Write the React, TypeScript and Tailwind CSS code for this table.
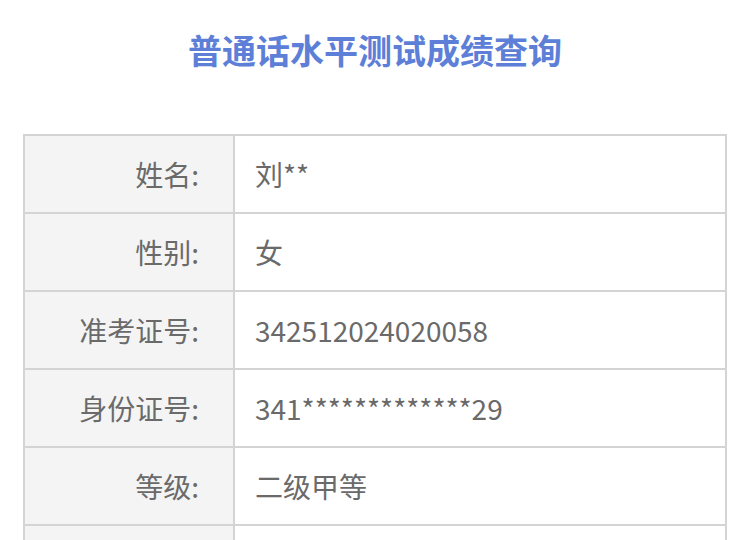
import React from "react"

const rows: { label: string; value: string }[] = [
  { label: "姓名", value: "刘**" },
  { label: "性别", value: "女" },
  { label: "准考证号", value: "342512024020058" },
  { label: "身份证号", value: "341*************29" },
  { label: "等级", value: "二级甲等" },
  { label: "分数", value: "87.5" },
]

export default function App() {
  return (
    <div
      className="min-h-screen bg-white px-[23px] pt-[29px]"
      style={{ fontFamily: '"Noto Sans CJK SC", "Noto Sans", sans-serif' }}
    >
      <h1 className="text-center text-[34px] font-semibold leading-[42px] text-[#5d7fd7]">
        普通话水平测试成绩查询
      </h1>
      <table className="mt-[63px] w-[704px] border-collapse text-[28px] text-[#6a6a6a]">
        <tbody>
          {rows.map((row) => (
            <tr key={row.label} className="h-[78px]">
              <td className="w-[210px] border-2 border-[#d4d4d4] bg-[#f4f4f4] pr-[34px] text-right">
                {row.label}:
              </td>
              <td className="border-2 border-[#d4d4d4] pl-[20px]">{row.value}</td>
            </tr>
          ))}
        </tbody>
      </table>
    </div>
  )
}
